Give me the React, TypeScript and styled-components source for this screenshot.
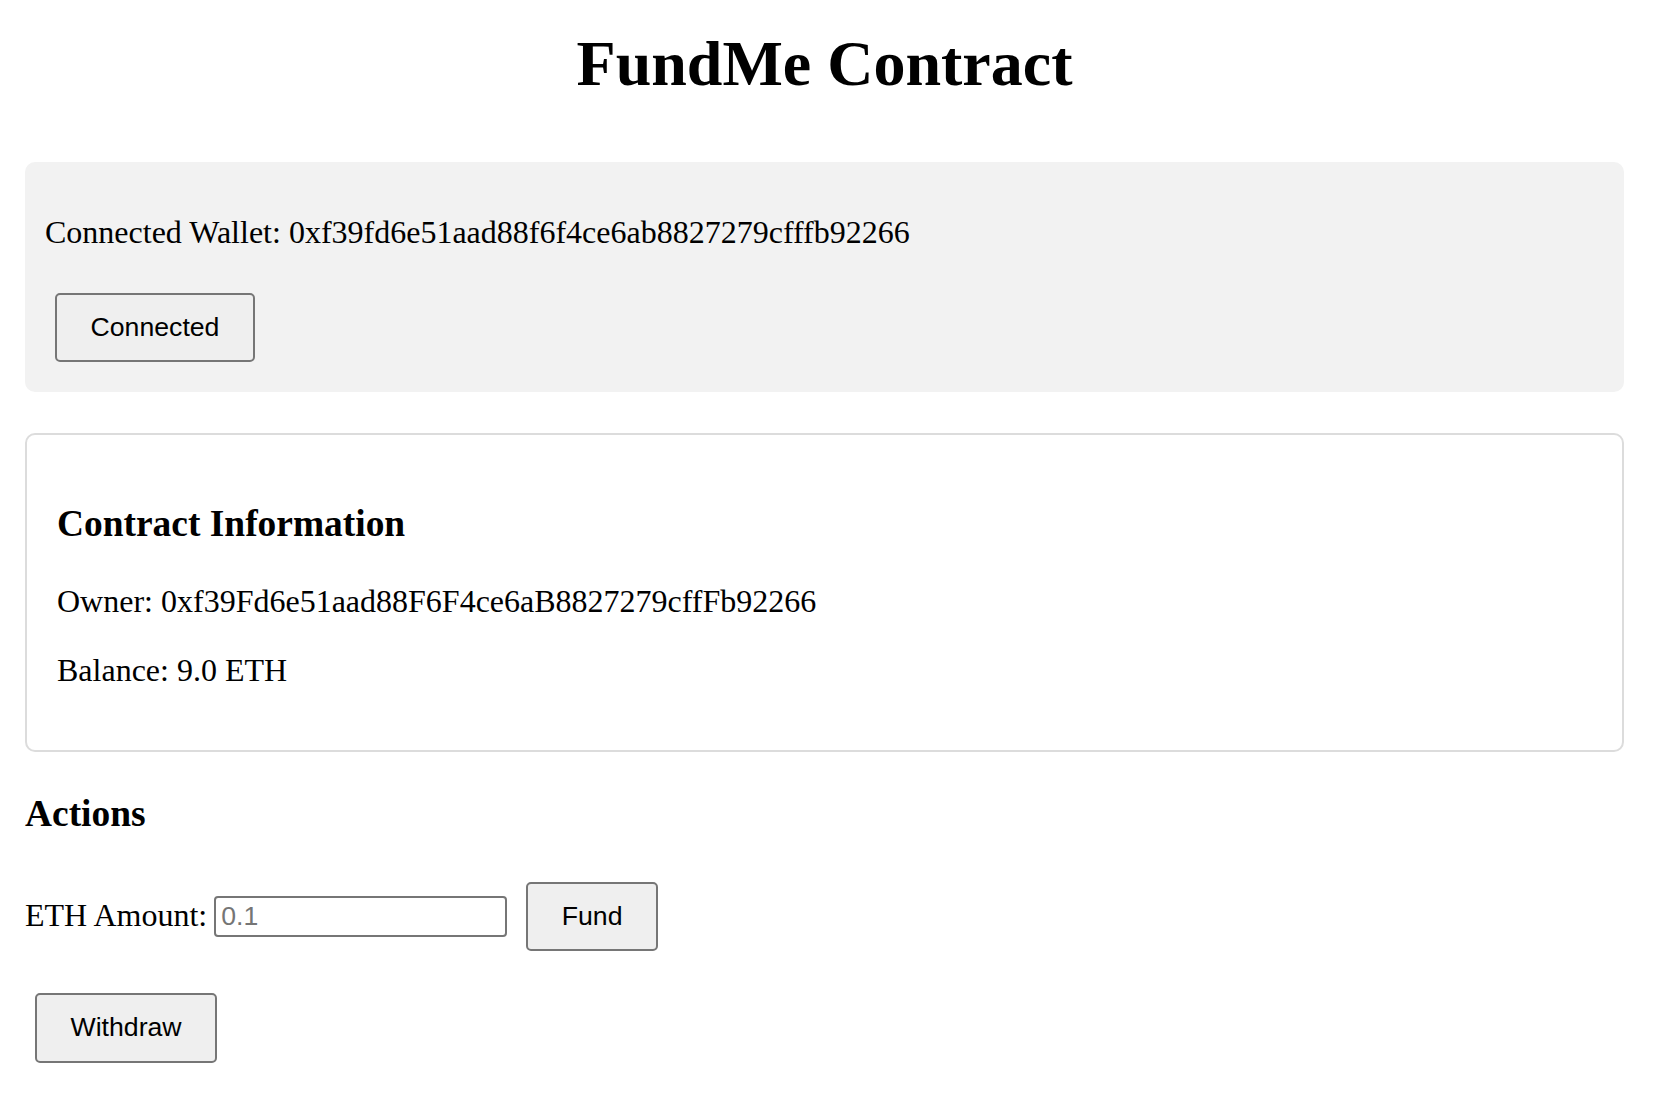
import React from "react";
import styled, { createGlobalStyle } from "styled-components";

const GlobalStyle = createGlobalStyle`
  html, body {
    margin: 0;
    padding: 0;
    background: #ffffff;
  }
  body {
    font-family: "Liberation Serif", "Times New Roman", serif;
    font-size: 32px;
    color: #000000;
  }
`;

const Page = styled.div`
  display: flex;
  flex-direction: column;
  padding: 0 32px 0 25px;
`;

const Title = styled.h1`
  margin: 27px 0 0;
  font-size: 64px;
  font-weight: bold;
  line-height: normal;
  text-align: center;
`;

const WalletPanel = styled.section`
  display: flex;
  flex-direction: column;
  align-items: flex-start;
  margin-top: 60.5px;
  padding: 20px;
  background: #f2f2f2;
  border-radius: 10px;
`;

const Text = styled.p`
  margin: 32px 0;
  line-height: normal;
`;

const InfoPanel = styled.section`
  display: flex;
  flex-direction: column;
  margin-top: 40.6px;
  padding: 30px;
  border: 2px solid #dcdcdc;
  border-radius: 10px;
`;

const Heading = styled.h3<{ $top: number }>`
  margin: ${(p) => p.$top}px 0 0;
  font-size: 37.44px;
  font-weight: bold;
  line-height: normal;
`;

const InfoLine = styled.p<{ $top: number; $bottom?: number }>`
  margin: ${(p) => p.$top}px 0 ${(p) => p.$bottom ?? 0}px;
  line-height: normal;
`;

const Button = styled.button<{ $ml?: number }>`
  box-sizing: border-box;
  height: 69.5px;
  margin: 10px;
  margin-left: ${(p) => (p.$ml ?? 10)}px;
  padding: 0 33.5px;
  font-family: "Liberation Sans", Arial, Helvetica, sans-serif;
  font-size: 26.67px;
  color: #000000;
  background: #efefef;
  border: 2px solid #767676;
  border-radius: 5px;
  cursor: pointer;
`;

const ActionRow = styled.div`
  display: flex;
  align-items: center;
  margin-top: 37.4px;
`;

const Label = styled.label`
  line-height: normal;
  position: relative;
  top: -1px;
`;

const AmountInput = styled.input`
  box-sizing: border-box;
  width: 292.6px;
  height: 41.3px;
  margin-left: 7px;
  padding: 0 5px;
  font-family: "Liberation Sans", Arial, Helvetica, sans-serif;
  font-size: 26.67px;
  color: #000000;
  background: #ffffff;
  border: 2px solid #767676;
  border-radius: 4px;
  outline: none;
  &::placeholder {
    color: #757575;
  }
`;

const WithdrawRow = styled.div`
  display: flex;
  margin-top: 21.6px;
`;

export default function App() {
  return (
    <>
      <GlobalStyle />
      <Page>
        <Title>FundMe Contract</Title>
        <WalletPanel>
          <Text>Connected Wallet: 0xf39fd6e51aad88f6f4ce6ab8827279cfffb92266</Text>
          <Button>Connected</Button>
        </WalletPanel>
        <InfoPanel>
          <Heading $top={37.6}>Contract Information</Heading>
          <InfoLine $top={37.4}>Owner: 0xf39Fd6e51aad88F6F4ce6aB8827279cffFb92266</InfoLine>
          <InfoLine $top={32} $bottom={31}>Balance: 9.0 ETH</InfoLine>
        </InfoPanel>
        <Heading $top={40}>Actions</Heading>
        <ActionRow>
          <Label htmlFor="amount">ETH Amount:</Label>
          <AmountInput id="amount" type="text" placeholder="0.1" />
          <Button $ml={19.4}>Fund</Button>
        </ActionRow>
        <WithdrawRow>
          <Button>Withdraw</Button>
        </WithdrawRow>
      </Page>
    </>
  );
}
